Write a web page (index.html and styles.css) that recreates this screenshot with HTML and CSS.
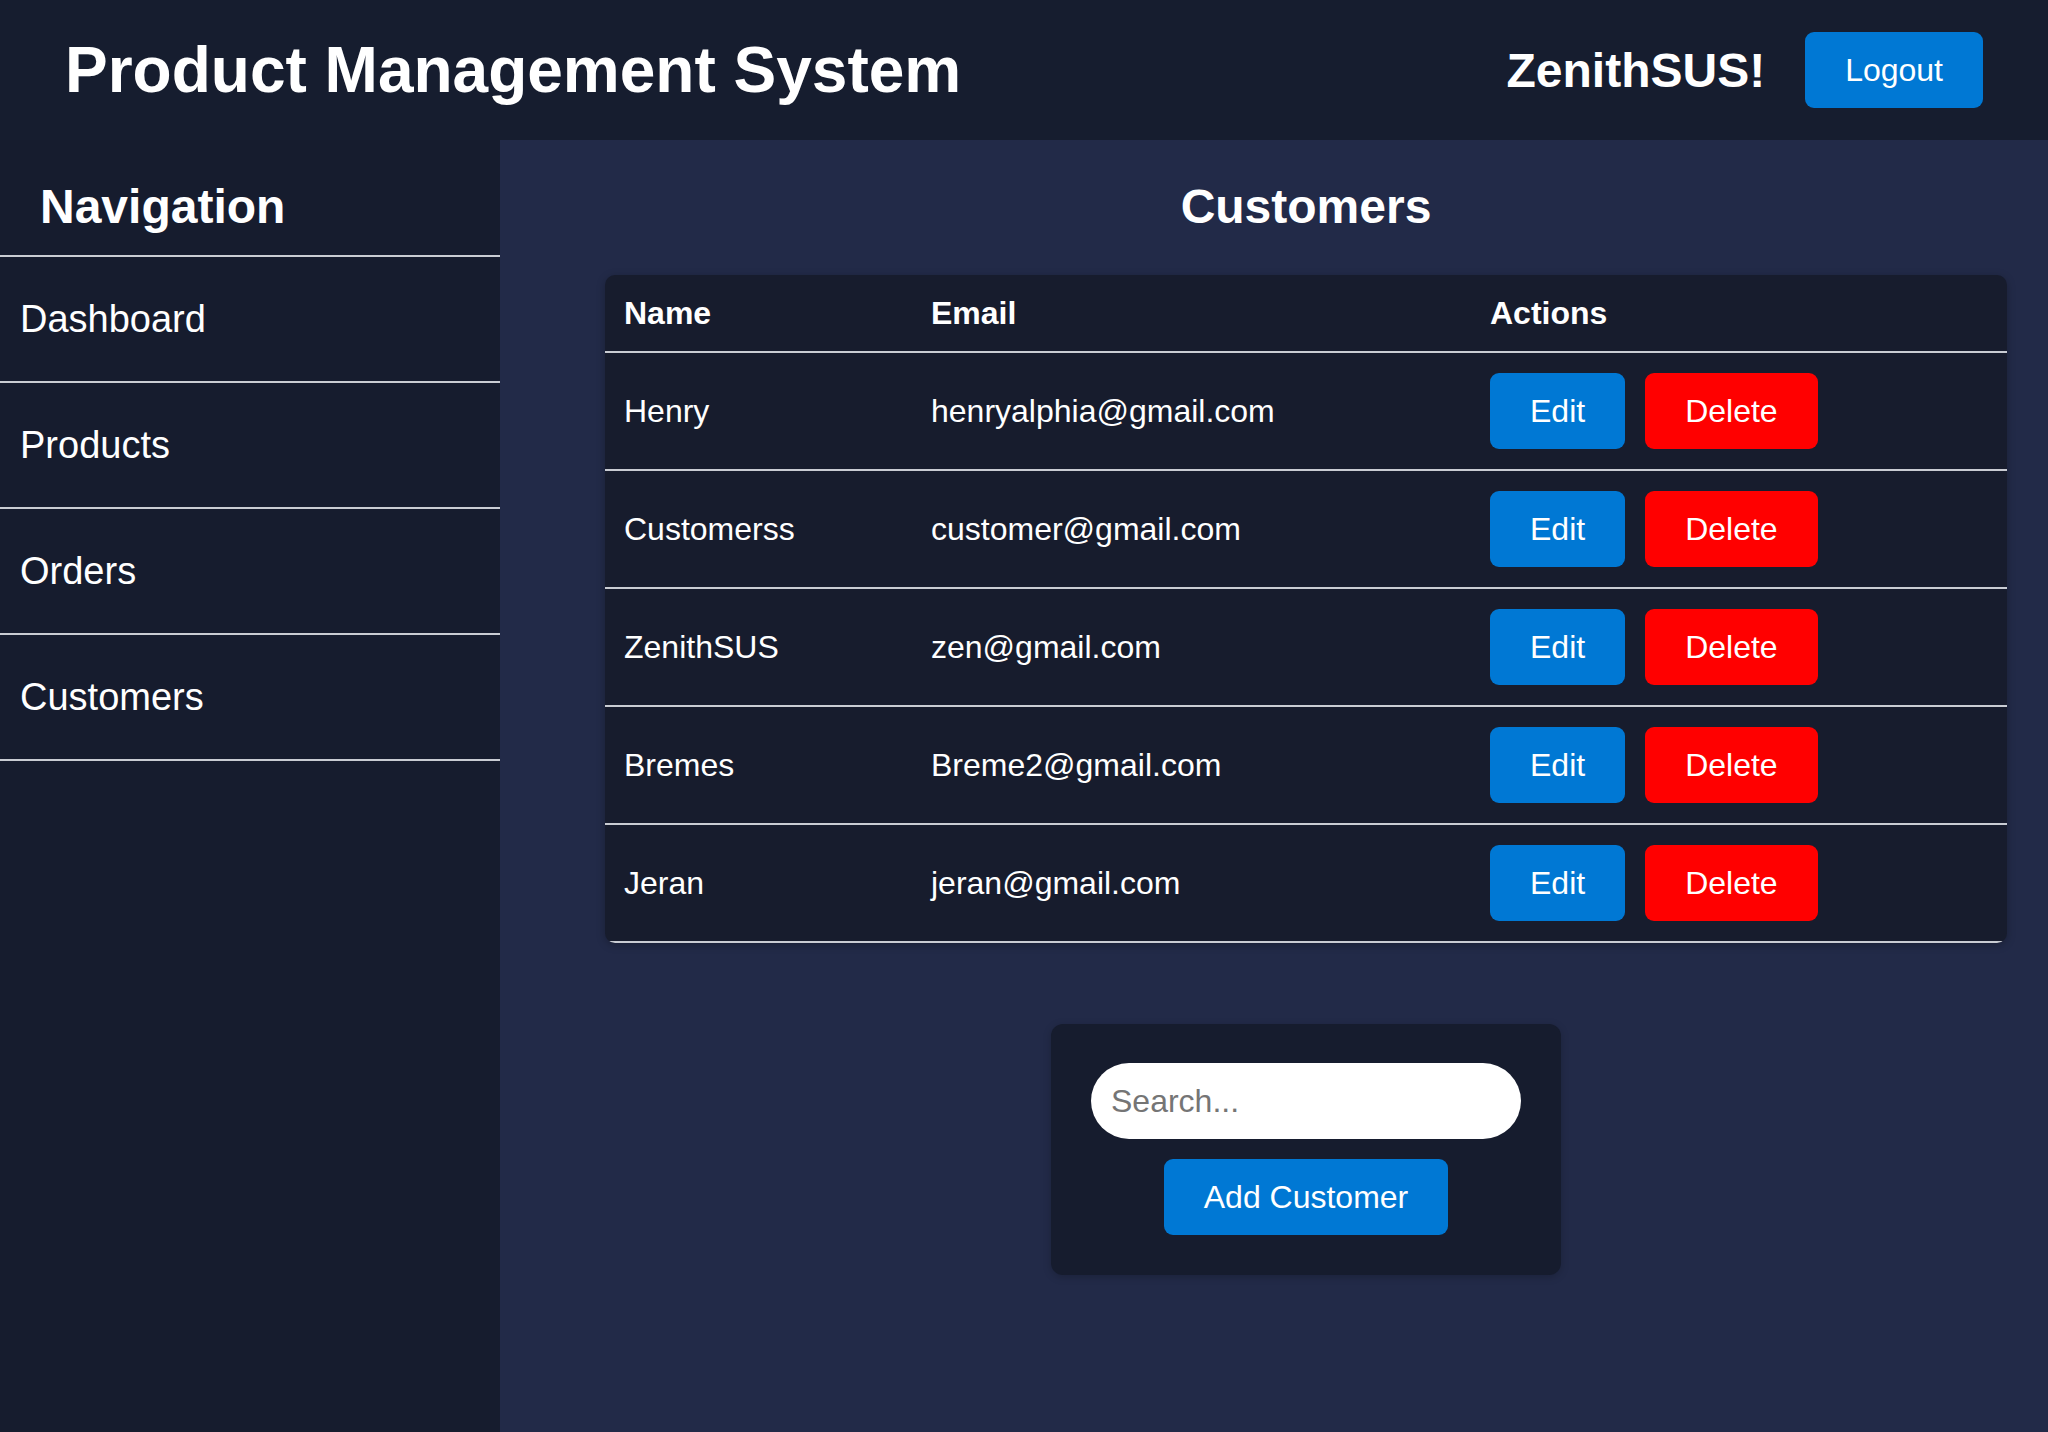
FILE: index.html
```html
<!DOCTYPE html>
<html lang="en">
<head>
<meta charset="utf-8">
<title>Product Management System</title>
<link rel="stylesheet" href="styles.css">
</head>
<body>
<header class="topbar">
  <h1 class="title">Product Management System</h1>
  <div class="user">
    <h2 class="username">ZenithSUS!</h2>
    <button class="btn btn-blue">Logout</button>
  </div>
</header>
<div class="layout">
  <aside class="sidebar">
    <h2 class="nav-title">Navigation</h2>
    <nav class="nav">
      <a class="nav-item">Dashboard</a>
      <a class="nav-item">Products</a>
      <a class="nav-item">Orders</a>
      <a class="nav-item">Customers</a>
    </nav>
  </aside>
  <main class="main">
    <h2 class="page-title">Customers</h2>
    <div class="table-wrap">
      <table class="table">
        <thead>
          <tr><th class="col-name">Name</th><th class="col-email">Email</th><th>Actions</th></tr>
        </thead>
        <tbody>
          <tr><td>Henry</td><td>henryalphia@gmail.com</td><td><div class="actions"><button class="btn btn-blue">Edit</button><button class="btn btn-red">Delete</button></div></td></tr>
          <tr><td>Customerss</td><td>customer@gmail.com</td><td><div class="actions"><button class="btn btn-blue">Edit</button><button class="btn btn-red">Delete</button></div></td></tr>
          <tr><td>ZenithSUS</td><td>zen@gmail.com</td><td><div class="actions"><button class="btn btn-blue">Edit</button><button class="btn btn-red">Delete</button></div></td></tr>
          <tr><td>Bremes</td><td>Breme2@gmail.com</td><td><div class="actions"><button class="btn btn-blue">Edit</button><button class="btn btn-red">Delete</button></div></td></tr>
          <tr><td>Jeran</td><td>jeran@gmail.com</td><td><div class="actions"><button class="btn btn-blue">Edit</button><button class="btn btn-red">Delete</button></div></td></tr>
        </tbody>
      </table>
    </div>
    <div class="tools">
      <input class="search" type="text" placeholder="Search...">
      <button class="btn btn-blue">Add Customer</button>
    </div>
  </main>
</div>
</body>
</html>
```
FILE: styles.css
```css
* { box-sizing: border-box; }
html, body { margin: 0; padding: 0; }
body {
  font-family: "Liberation Sans", Arial, sans-serif;
  color: #ffffff;
  background: #222a48;
  height: 1432px;
  overflow: hidden;
  display: flex;
  flex-direction: column;
}
.topbar {
  height: 140px;
  flex: none;
  background: #161d2f;
  display: flex;
  align-items: center;
  justify-content: space-between;
  padding: 0 65px;
}
.title {
  margin: 0;
  font-size: 64px;
  font-weight: bold;
  line-height: 74px;
}
.user {
  display: flex;
  align-items: center;
  gap: 40px;
}
.username {
  margin: 0;
  font-size: 48px;
  font-weight: bold;
  line-height: 55px;
}
.btn {
  font-family: "Liberation Sans", Arial, sans-serif;
  font-size: 32px;
  line-height: 36px;
  color: #ffffff;
  border: none;
  border-radius: 9px;
  padding: 20px 40px;
  cursor: pointer;
}
.btn-blue { background: #0078d4; }
.btn-red { background: #ff0000; }
.layout {
  flex: 1;
  display: flex;
  min-height: 0;
}
.sidebar {
  width: 500px;
  flex: none;
  background: #161c2e;
}
.nav-title {
  margin: 0;
  font-size: 48px;
  line-height: 55px;
  font-weight: bold;
  padding: 39px 40px 21px;
  border-bottom: 2px solid #c9ccd3;
}
.nav { display: flex; flex-direction: column; }
.nav-item {
  display: block;
  font-size: 38px;
  line-height: 44px;
  padding: 40px 20px;
  border-bottom: 2px solid #c9ccd3;
  color: #ffffff;
}
.main {
  flex: 1;
  padding: 0 41px 0 105px;
  display: flex;
  flex-direction: column;
  align-items: center;
}
.page-title {
  margin: 39px 0 41px;
  font-size: 48px;
  line-height: 55px;
  font-weight: bold;
}
.table-wrap {
  width: 100%;
  background: #171c2d;
  border-radius: 10px;
  overflow: hidden;
  box-shadow: 0 2px 8px rgba(0, 0, 0, 0.25);
}
.table {
  width: 100%;
  border-collapse: collapse;
  font-size: 32px;
}
.table th, .table td {
  text-align: left;
  padding: 20px 20px 20px 19px;
  border-bottom: 2px solid #c9ccd3;
  line-height: 36px;
  vertical-align: middle;
}
.table th { font-weight: bold; }
.col-name { width: 307px; }
.col-email { width: 559px; }
.actions { display: flex; gap: 20px; }
.tools {
  margin-top: 81px;
  width: 510px;
  background: #161c2e;
  border-radius: 12px;
  padding: 39px 40px 40px;
  display: flex;
  flex-direction: column;
  align-items: center;
  gap: 20px;
  box-shadow: 0 2px 8px rgba(0, 0, 0, 0.2);
}
.search {
  width: 430px;
  height: 76px;
  border: none;
  border-radius: 38px;
  padding: 0 20px;
  font-family: "Liberation Sans", Arial, sans-serif;
  font-size: 32px;
  color: #222;
  background: #ffffff;
  outline: none;
}
.search::placeholder { color: #757575; }
```
